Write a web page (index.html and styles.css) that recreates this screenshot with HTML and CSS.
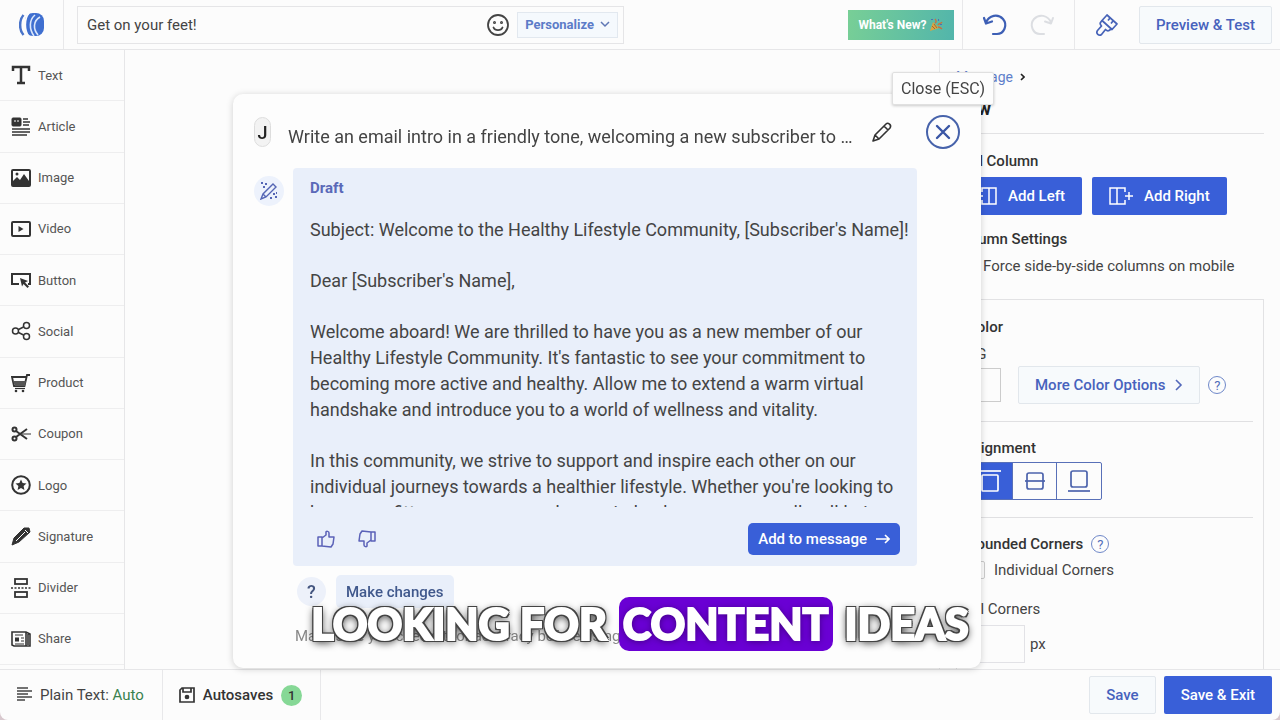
FILE: index.html
```html
<!DOCTYPE html>
<html lang="en">
<head>
  <meta charset="UTF-8">
  <meta name="viewport" content="width=device-width, initial-scale=1.0">
  <title>Message Editor</title>
  <link rel="stylesheet" href="styles.css">
</head>
<body>

  <div class="app">

    <!-- Top bar -->
    <header class="topbar">
      <a class="logo" href="#" aria-label="Home">
        <svg width="26" height="26" viewBox="0 0 26 26">
          <rect x="6" y="1" width="19" height="23" rx="8" fill="#3f6fd0"/>
          <path d="M4.500 3C0 8 0 18 4.500 23" fill="none" stroke="#4a74c9" stroke-width="2.500"/>
          <path d="M10 1C5 7 5 18 10 25" fill="none" stroke="#fcfcfc" stroke-width="1.800"/>
          <path d="M16 3C10 8 10 17 15 24M21 5C14 9 14 17 19 23" fill="none" stroke="#dbe7fb" stroke-width="1.600"/>
        </svg>
      </a>
      <div class="subject">
        <input type="text" value="Get on your feet!" aria-label="Subject">
        <button class="icon-btn" aria-label="Emoji">
          <svg width="24" height="24" viewBox="0 0 24 24" fill="none" stroke="#444" stroke-width="1.800" stroke-linecap="round">
            <circle cx="12" cy="12" r="10"/>
            <path d="M7.500 14.500c1.500 3.500 7.500 3.500 9 0"/>
            <circle cx="8.500" cy="9.500" r=".6"/><circle cx="15.500" cy="9.500" r=".6"/>
          </svg>
        </button>
        <button class="personalize">Personalize
          <svg width="10" height="7" viewBox="0 0 10 7" fill="none" stroke="#5f77b5" stroke-width="1.500"><path d="M1 1l4 4 4-4"/></svg>
        </button>
      </div>
      <button class="whats-new">What's New?
        <svg width="14" height="14" viewBox="0 0 14 14">
          <path d="M1 13L4 4l6 6z" fill="#d9a441"/>
          <path d="M3 8l3 3M5 6l3 4" stroke="#9a6a3a" stroke-width="1"/>
          <path d="M6 5c2-1 1-3 0-4M9 7c1-2 3-1 4-3M9 9c2 0 3 1 4 2" fill="none" stroke="#c7723f" stroke-width="1.400"/>
          <path d="M9 1h1v2H9zM11 6h2v1h-2zM2 1h2v1H2z" fill="#4d6fb8"/>
        </svg>
      </button>
      <div class="history">
        <button class="icon-btn" aria-label="Undo">
          <svg width="26" height="24" viewBox="0 0 26 24" fill="none" stroke="#3d5fb5" stroke-width="2.200" stroke-linecap="round" stroke-linejoin="round">
            <path d="M4 9.500C7 2 16 .5 21 6c5 6 1 15-6 15h-4"/><path d="M2 5l2 5.500 6-2"/>
          </svg>
        </button>
        <button class="icon-btn" aria-label="Redo">
          <svg width="26" height="24" viewBox="0 0 26 24" fill="none" stroke="#dcdee2" stroke-width="2" stroke-linecap="round" stroke-linejoin="round">
            <path d="M22 9.500C19 2 10 .5 5 6c-5 6-1 15 6 15h4"/><path d="M24 5l-2 5.500-6-2"/>
          </svg>
        </button>
      </div>
      <div class="preview">
        <button class="icon-btn" aria-label="Styles">
          <svg width="24" height="24" viewBox="0 0 24 24" fill="none" stroke="#4763b8" stroke-width="1.700" stroke-linejoin="round">
            <path d="M12 2l10 9-5 5.500L7 7.500z"/><path d="M7 7.500L5.500 9.500c-1 1.500 0 2.500 1 3.500l-4 4.500c-2 3 1.500 6 4 4l4-5c1 1 2 2 3.500 1l3-2"/><path d="M15 5l-2 2.500M18 8l-2 2.500"/>
          </svg>
        </button>
        <button class="btn-light">Preview &amp; Test</button>
      </div>
    </header>

    <main class="workspace">

      <!-- Content blocks -->
      <nav class="blocks">
        <a href="#"><svg viewBox="0 0 20 20"><path d="M2 6V2h16v4M10 2v16M6 18h8" stroke-width="2.500"/></svg>Text</a>
        <a href="#"><svg viewBox="0 0 20 20"><rect x="1" y="2" width="9" height="8" rx="1" fill="#333"/><path d="M3 5h2M6 5h2" stroke="#fff"/><path d="M12 3h5M12 6h7M12 9h6M1 13h18M1 16h18M1 19h15" stroke-width="1.700"/></svg>Article</a>
        <a href="#"><svg viewBox="0 0 20 20"><rect x="1" y="2" width="18" height="16" rx="1" stroke-width="2"/><path d="M2 17v-4l4-4 3 3 4-6 5 7v4z" fill="#333" stroke="none"/><circle cx="6" cy="6" r="1.500" fill="#333" stroke="none"/></svg>Image</a>
        <a href="#"><svg viewBox="0 0 20 20"><rect x="1" y="3" width="18" height="14" rx="1" stroke-width="2"/><path d="M7.500 7v6l5-3z" fill="#333" stroke="none"/></svg>Video</a>
        <a href="#"><svg viewBox="0 0 20 20"><path d="M8 14H1V4h18v10h-2" stroke-width="2"/><path d="M9 8l8 3-3 1.500 4 4-1.500 1.500-4-4-1.500 2.500z" fill="#333" stroke="none"/></svg>Button</a>
        <a href="#"><svg viewBox="0 0 20 20"><g stroke-width="1.500"><circle cx="4.500" cy="10" r="3"/><circle cx="15.500" cy="4.500" r="3"/><circle cx="15.500" cy="15.500" r="3"/><path d="M7.500 8.500l5-2.500M7.500 11.500l5 2.500"/></g></svg>Social</a>
        <a href="#"><svg viewBox="0 0 20 20"><path d="M19 2h-3l-2.500 11H3L1 4h14" stroke-width="1.800"/><path d="M2 8h13l-1 5H4z" fill="#555" stroke="none"/><path d="M4 15.500h10" stroke-width="1.200"/><circle cx="5" cy="18" r="1.300" fill="#333" stroke="none"/><circle cx="12" cy="18" r="1.300" fill="#333" stroke="none"/></svg>Product</a>
        <a href="#"><svg viewBox="0 0 20 20"><circle cx="3.500" cy="5.500" r="2" stroke-width="2"/><circle cx="3.500" cy="14.500" r="2" stroke-width="2"/><path d="M5 7l11 8M5 13l11-8" stroke-width="2"/><path d="M11 10h9" stroke-width="1"/></svg>Coupon</a>
        <a href="#"><svg viewBox="0 0 20 20"><circle cx="10" cy="10" r="8.800" stroke-width="2"/><path d="M10 4.500l1.600 3.600 3.900.4-2.900 2.600.8 3.900-3.400-2-3.400 2 .8-3.900-2.900-2.600 3.900-.4z" fill="#333" stroke="none"/></svg>Logo</a>
        <a href="#"><svg viewBox="0 0 20 20"><path d="M1 19l2-7L13 2l5 0 1 4L8 16z" fill="#333"/><path d="M5 15l9-9M14 4l3 3" stroke="#fff" stroke-width="1"/></svg>Signature</a>
        <a href="#"><svg viewBox="0 0 20 20"><rect x="4" y="1" width="12" height="5" stroke-width="1.800"/><rect x="4" y="14" width="12" height="5" stroke-width="1.800"/><path d="M0 10h20" stroke-width="1.500" stroke-dasharray="2 1.500"/></svg>Divider</a>
        <a href="#"><svg viewBox="0 0 20 20"><path d="M1 3h14l4 2v12H3l-2-1zM15 3v14M17 5v11" stroke-width="1.600"/><path d="M4 6h8M10 9h3M10 12h3M4 15h9" stroke-width="1"/><rect x="4" y="8.500" width="4" height="4" fill="#333" stroke="none"/></svg>Share</a>
      </nav>

      <div class="canvas"></div>

      <!-- Row settings -->
      <aside class="panel">
        <div class="breadcrumb"><a href="#">Message</a>
          <svg width="5" height="8" viewBox="0 0 5 8" fill="none" stroke="#222" stroke-width="1.600"><path d="M1 1l3 3-3 3"/></svg>
        </div>
        <h1>Row</h1>
        <h2>Add Column</h2>
        <div class="add-buttons">
          <button class="btn-blue"><svg width="24" height="18" viewBox="0 0 24 18" fill="none" stroke="#fff" stroke-width="1.500"><path d="M9 5V1h14v16H9v-4M16 1v16M3 9h7M6 6v6"/></svg>Add Left</button>
          <button class="btn-blue"><svg width="24" height="18" viewBox="0 0 24 18" fill="none" stroke="#fff" stroke-width="1.500"><path d="M16 5V1H1v16h15v-4M8 1v16M16 9h8M20 5v8"/></svg>Add Right</button>
        </div>
        <h2>Column Settings</h2>
        <label class="check"><input type="checkbox">Force side-by-side columns on mobile</label>

        <section class="column-box">
          <h2>Color</h2>
          <label class="bg-label" for="bg">BG</label>
          <div class="color-row">
            <input id="bg" class="swatch" type="text">
            <button class="btn-light">More Color Options
              <svg width="8" height="12" viewBox="0 0 8 12" fill="none" stroke="#5268ba" stroke-width="1.600"><path d="M1 1l5 5-5 5"/></svg>
            </button>
            <a class="help" href="#">?</a>
          </div>
          <hr>
          <h2>Alignment</h2>
          <div class="segments">
            <button class="selected" aria-label="Top"><svg width="22" height="22" viewBox="0 0 22 22"><path d="M0 1h22"/><rect x="3" y="5" width="16" height="16" rx="1"/></svg></button>
            <button aria-label="Middle"><svg width="22" height="22" viewBox="0 0 22 22"><rect x="3" y="3" width="16" height="16" rx="2"/><path d="M1 11h20"/></svg></button>
            <button aria-label="Bottom"><svg width="22" height="22" viewBox="0 0 22 22"><rect x="3" y="1" width="16" height="16" rx="2"/><path d="M0 21h22"/></svg></button>
          </div>
          <hr>
          <div class="title-row"><h2>Rounded Corners</h2><a class="help" href="#">?</a></div>
          <label class="check"><input type="checkbox">Individual Corners</label>
          <label class="corner-label" for="corners">All Corners</label>
          <div class="corner-row"><input id="corners" type="text">px</div>
        </section>
      </aside>
    </main>

    <!-- Bottom bar -->
    <footer class="bottombar">
      <div class="status">
        <svg width="16" height="16" viewBox="0 0 16 16" fill="none" stroke="#444" stroke-width="1.600"><path d="M1 1h11M1 4h15M1 7h11M1 10h15M1 13h8"/></svg>
        <span>Plain Text: <a href="#">Auto</a></span>
      </div>
      <div class="status autosaves">
        <svg width="16" height="16" viewBox="0 0 16 16" fill="none" stroke="#333" stroke-width="1.700"><path d="M1 3l2-2h12v14H1zM4 1v4h8V1"/><circle cx="8" cy="10" r="1.500" fill="#333"/></svg>
        <span>Autosaves</span>
        <span class="count">1</span>
      </div>
      <div class="save-buttons">
        <button class="btn-light">Save</button>
        <button class="btn-blue">Save &amp; Exit</button>
      </div>
    </footer>
  </div>

  <!-- AI writer dialog -->
  <div class="dialog" role="dialog" aria-label="AI writer">
    <div class="prompt">
      <span class="avatar">J</span>
      <p>Write an email intro in a friendly tone, welcoming a new subscriber to …</p>
      <button class="icon-btn" aria-label="Edit">
        <svg width="22" height="22" viewBox="0 0 22 22" fill="none" stroke="#333" stroke-width="1.600" stroke-linejoin="round"><path d="M2 20l2-6L15 3c2-2 6 1 4 4L8 18zM4 14l4 4M13 5l4 4"/></svg>
      </button>
      <button class="close-btn" aria-label="Close">
        <svg width="16" height="16" viewBox="0 0 16 16" fill="none" stroke="#3a56a5" stroke-width="2.400" stroke-linecap="round"><path d="M2 2l12 12M14 2L2 14"/></svg>
      </button>
      <div class="tooltip">Close (ESC)</div>
    </div>
    <div class="answer">
      <span class="wand">
        <svg width="18" height="18" viewBox="0 0 18 18" fill="none" stroke="#5566b5" stroke-width="1.400"><path d="M1 17l2-5L13 2l3 3L6 15zM3 12l3 3"/><path d="M1 1h2M5 2h2M3 5h2M13 12h2M15 15h2M10 16h2M16 11h1" stroke-width="1.800"/></svg>
      </span>
      <div class="draft">
        <h3>Draft</h3>
        <div class="draft-text">
          <p>Subject: Welcome to the Healthy Lifestyle Community, [Subscriber's Name]!</p>
          <p>Dear [Subscriber's Name],</p>
          <p>Welcome aboard! We are thrilled to have you as a new member of our Healthy Lifestyle Community. It's fantastic to see your commitment to becoming more active and healthy. Allow me to extend a warm virtual handshake and introduce you to a world of wellness and vitality.</p>
          <p>In this community, we strive to support and inspire each other on our individual journeys towards a healthier lifestyle. Whether you're looking to become a fitter person, ease a busy mind or know your overall well-being, we are here.</p>
        </div>
        <div class="draft-actions">
          <button class="icon-btn" aria-label="Like">
            <svg width="18" height="18" viewBox="0 0 18 18" fill="none" stroke="#5b62b8" stroke-width="1.500" stroke-linejoin="round"><path d="M1 7h4v9H1zM5 8l4-3V2c0-1 3-1 3 1v4h5l-1 7-2 3-9-1"/></svg>
          </button>
          <button class="icon-btn" aria-label="Dislike">
            <svg width="18" height="18" viewBox="0 0 18 18" fill="none" stroke="#5b62b8" stroke-width="1.500" stroke-linejoin="round"><path d="M17 11h-4V2h4zM13 10l-4 3v3c0 1-3 1-3-1v-4H1l1-7 2-3 9 1"/></svg>
          </button>
          <button class="add-message">Add to message
            <svg width="14" height="10" viewBox="0 0 14 10" fill="none" stroke="#fff" stroke-width="1.600"><path d="M0 5h12M9 1l4 4-4 4"/></svg>
          </button>
        </div>
      </div>
    </div>
    <div class="follow-up">
      <span class="question">?</span>
      <button class="chip">Make changes</button>
    </div>
    <p class="note">Make sure you check it for accuracy before using</p>
  </div>

  <!-- Caption -->
  <div class="caption">
    <span>LOOKING FOR</span>
    <span class="highlight">CONTENT</span>
    <span>IDEAS</span>
  </div>

</body>
</html>
```
FILE: styles.css
```css
* {
  box-sizing: border-box;
}

body {
  margin: 0;
  font-family: Roboto, 'Liberation Sans', sans-serif;
  font-size: 15px;
  color: #444;
  background: #d8c8ce;
  overflow: hidden;
}

h1, h2, h3, p {
  margin: 0;
}

a {
  color: inherit;
  text-decoration: none;
}

button, input {
  font-family: inherit;
  font-size: 15px;
  color: inherit;
}

button {
  padding: 0;
  border: none;
  background: none;
  cursor: pointer;
}

svg {
  flex-shrink: 0;
}

.app {
  display: flex;
  flex-direction: column;
  height: 100vh;
  background: #fcfcfc;
  border-radius: 0 0 8px 8px;
  overflow: hidden;
}

.icon-btn {
  display: flex;
}

.btn-light,
.btn-blue {
  height: 38px;
  display: flex;
  align-items: center;
  justify-content: center;
  border-radius: 2px;
  font-weight: 500;
}

.btn-light {
  padding: 0 16px;
  gap: 10px;
  border: 1px solid #e2e7ec;
  background: #f7fafc;
  color: #4762bd;
}

.btn-blue {
  padding: 0 17px;
  gap: 11px;
  background: #395fd8;
  color: #fff;
}

/* Top bar */
.topbar {
  flex: none;
  height: 50px;
  display: flex;
  align-items: center;
  border-bottom: 1px solid #e6e6e8;
}

.logo {
  width: 64px;
  height: 49px;
  display: flex;
  align-items: center;
  justify-content: center;
  border-right: 1px solid #e8e8ea;
}

.subject {
  width: 547px;
  height: 38px;
  margin-left: 13px;
  margin-right: auto;
  padding: 0 5px 0 9px;
  display: flex;
  align-items: center;
  gap: 7px;
  border: 1px solid #e5e5e7;
}

.subject input {
  flex: 1;
  min-width: 0;
  padding: 0;
  border: none;
  outline: none;
  background: none;
}

.personalize {
  height: 26px;
  padding: 0 7px;
  display: flex;
  align-items: center;
  gap: 6px;
  border: 1px solid #e2e8ef;
  background: #f5f9fd;
  color: #5c7cc8;
  font-size: 13px;
  font-weight: 700;
}

.whats-new {
  width: 106px;
  height: 30px;
  margin-right: 8px;
  display: flex;
  align-items: center;
  justify-content: center;
  gap: 3px;
  background: linear-gradient(100deg, #78cf96, #52b5ab);
  color: #fff;
  font-size: 12px;
  font-weight: 700;
}

.history {
  width: 113px;
  height: 49px;
  display: flex;
  align-items: center;
  justify-content: center;
  gap: 21px;
  border-left: 1px solid #e8e8ea;
  border-right: 1px solid #e8e8ea;
}

.preview {
  padding: 0 8px 0 20px;
  display: flex;
  align-items: center;
  gap: 20px;
}

/* Middle area */
.workspace {
  flex: 1;
  min-height: 0;
  display: flex;
}

.blocks {
  width: 125px;
  display: flex;
  flex-direction: column;
  padding-bottom: 4px;
  border-right: 1px solid #e6e6e8;
}

.blocks a {
  flex: 1;
  display: flex;
  align-items: center;
  gap: 7px;
  padding-left: 11px;
  border-bottom: 1px solid #eeeeef;
  font-size: 13px;
  color: #555;
}

.blocks svg {
  width: 20px;
  height: 20px;
  fill: none;
  stroke: #333;
}

.canvas {
  flex: 1;
}

/* Settings panel */
.panel {
  width: 341px;
  padding: 18px 16px 0;
  border-left: 1px solid #e8e8ea;
  overflow: hidden;
}

.panel h1 {
  padding: 11px 0 12px;
  margin-bottom: 17px;
  border-bottom: 1px solid #e2e2e4;
  font-size: 18px;
  line-height: 24px;
  color: #222;
}

.panel h2 {
  font-size: 15px;
  font-weight: 500;
  line-height: 20px;
  color: #333;
}

.breadcrumb {
  display: flex;
  align-items: center;
  gap: 7px;
  font-size: 14px;
  line-height: 18px;
  color: #5f7fcb;
}

.add-buttons {
  display: flex;
  gap: 10px;
  margin: 6px 0 14px;
}

.check {
  display: flex;
  align-items: center;
  gap: 9px;
  line-height: 20px;
}

.panel > .check {
  margin-top: 7px;
}

.check input {
  width: 18px;
  height: 18px;
  margin: 0;
  appearance: none;
  border: 1px solid #ccc;
  border-radius: 2px;
}

.column-box {
  height: 420px;
  margin-top: 23px;
  padding: 17px 10px 0;
  border: 1px solid #e2e2e4;
}

.column-box hr {
  margin: 17px 0 16px;
  border: none;
  border-top: 1px solid #e0e0e2;
}

.bg-label,
.corner-label {
  display: block;
  margin-top: 7px;
  line-height: 20px;
}

.color-row {
  display: flex;
  align-items: center;
  margin-top: 2px;
}

.swatch {
  width: 34px;
  height: 34px;
  margin-right: 17px;
  border: 1px solid #ccc;
  background: none;
}

.help {
  width: 18px;
  height: 18px;
  margin-left: 8px;
  display: flex;
  align-items: center;
  justify-content: center;
  border: 1px solid #6f88c9;
  border-radius: 50%;
  color: #4f6cba;
  font-size: 13px;
}

.segments {
  display: flex;
  width: 135px;
  height: 38px;
  margin-top: 4px;
  border: 1px solid #5870b8;
  border-radius: 2px;
}

.segments button {
  flex: 1;
  display: flex;
  align-items: center;
  justify-content: center;
}

.segments button + button {
  border-left: 1px solid #5870b8;
}

.segments svg {
  fill: none;
  stroke: #4c63ac;
  stroke-width: 1.7;
}

.segments .selected {
  background: #395fd8;
}

.segments .selected svg {
  stroke: #fff;
}

.title-row {
  display: flex;
  align-items: center;
}

.column-box .check {
  margin-top: 6px;
}

.corner-label {
  margin-top: 19px;
}

.corner-row {
  display: flex;
  align-items: center;
  gap: 5px;
  margin-top: 6px;
}

.corner-row input {
  width: 58px;
  height: 38px;
  border: 1px solid #e2e2e6;
  background: none;
}

/* Bottom bar */
.bottombar {
  flex: none;
  height: 51px;
  display: flex;
  align-items: center;
  border-top: 1px solid #e6e6e8;
}

.status {
  height: 50px;
  padding: 0 18px 0 16px;
  display: flex;
  align-items: center;
  gap: 8px;
  border-right: 1px solid #e8e8ea;
}

.status a {
  color: #39824f;
}

.autosaves {
  color: #333;
  font-weight: 500;
}

.count {
  width: 21px;
  height: 21px;
  border-radius: 50%;
  background: #86d896;
  font-size: 13px;
  line-height: 21px;
  text-align: center;
}

.save-buttons {
  margin-left: auto;
  padding-right: 8px;
  display: flex;
  gap: 8px;
}

/* AI writer dialog */
.dialog {
  position: fixed;
  top: 94px;
  right: 299px;
  bottom: 52px;
  left: 233px;
  display: flex;
  flex-direction: column;
  padding-bottom: 22px;
  border-radius: 10px;
  background: #fdfdfd;
  box-shadow: 0 1px 7px rgba(0, 0, 0, 0.18);
}

.prompt {
  position: relative;
  height: 74px;
  padding: 2px 21px 0;
  display: flex;
  align-items: center;
}

.prompt p {
  flex: 1;
  padding: 10px 0 0 17px;
  font-size: 18px;
  line-height: 22px;
  white-space: nowrap;
}

.avatar {
  width: 17px;
  height: 30px;
  border: 1px solid #ddd;
  border-radius: 9px;
  background: #f3f3f3;
  color: #222;
  font-size: 18px;
  font-weight: 500;
  line-height: 30px;
  text-align: center;
}

.close-btn {
  width: 34px;
  height: 34px;
  margin-left: 33px;
  display: flex;
  align-items: center;
  justify-content: center;
  border: 2px solid #4763ab;
  border-radius: 50%;
}

.tooltip {
  position: absolute;
  top: -22px;
  right: -13px;
  padding: 0 8px;
  border: 1px solid #e0e0e0;
  border-radius: 2px;
  background: #fdfdfd;
  box-shadow: 0 1px 3px rgba(0, 0, 0, 0.2);
  font-size: 16px;
  line-height: 31px;
}

.answer {
  flex: 1;
  min-height: 0;
  display: flex;
  gap: 9px;
  padding: 0 64px 0 21px;
}

.wand {
  width: 30px;
  height: 30px;
  margin-top: 8px;
  display: flex;
  align-items: center;
  justify-content: center;
  border-radius: 50%;
  background: #edf2fc;
}

.draft {
  flex: 1;
  display: flex;
  flex-direction: column;
  padding: 10px 6px 11px 17px;
  border-radius: 4px;
  background: #e9effa;
}

.draft h3 {
  margin-bottom: 19px;
  font-size: 15px;
  font-weight: 700;
  line-height: 20px;
  color: #5a69b8;
}

.draft-text {
  flex: 1;
  min-height: 0;
  overflow: hidden;
  font-size: 18px;
  line-height: 26px;
}

.draft-text p {
  margin-bottom: 25px;
}

.draft-actions {
  display: flex;
  align-items: center;
  gap: 23px;
  padding: 16px 11px 0 7px;
}

.add-message {
  height: 32px;
  margin-left: auto;
  padding: 0 10px;
  display: flex;
  align-items: center;
  gap: 9px;
  border-radius: 5px;
  background: #395fd8;
  color: #fff;
  font-weight: 500;
}

.follow-up {
  display: flex;
  align-items: center;
  gap: 10px;
  margin: 9px 0 18px 64px;
}

.question {
  width: 29px;
  height: 29px;
  border-radius: 50%;
  background: #edf1fa;
  color: #44557f;
  font-size: 18px;
  font-weight: 500;
  line-height: 29px;
  text-align: center;
}

.chip {
  height: 33px;
  padding: 0 10px;
  border-radius: 5px;
  background: #e9effa;
  color: #40588c;
  font-weight: 500;
}

.note {
  padding-left: 62px;
  font-size: 15px;
  line-height: 20px;
  color: #888;
}

/* Caption */
.caption {
  position: fixed;
  right: 0;
  bottom: 69px;
  left: 0;
  display: flex;
  justify-content: center;
  gap: 12px;
  font-family: Lato, 'Liberation Sans', sans-serif;
  font-size: 43px;
  font-weight: 900;
  line-height: 54px;
  color: #fff;
  -webkit-text-stroke: 2px #fff;
  text-shadow: 2px 0 #444, -2px 0 #444, 0 2px #444, 0 -2px #444, 2px 2px #444, -2px 2px #444, 2px -2px #444, -2px -2px #444, 0 2px 8px #000;
}

.highlight {
  padding: 0 4px;
  border-radius: 10px;
  background: #6a00d4;
  text-shadow: 0 1px 7px rgba(0, 0, 0, 0.5);
}
```
